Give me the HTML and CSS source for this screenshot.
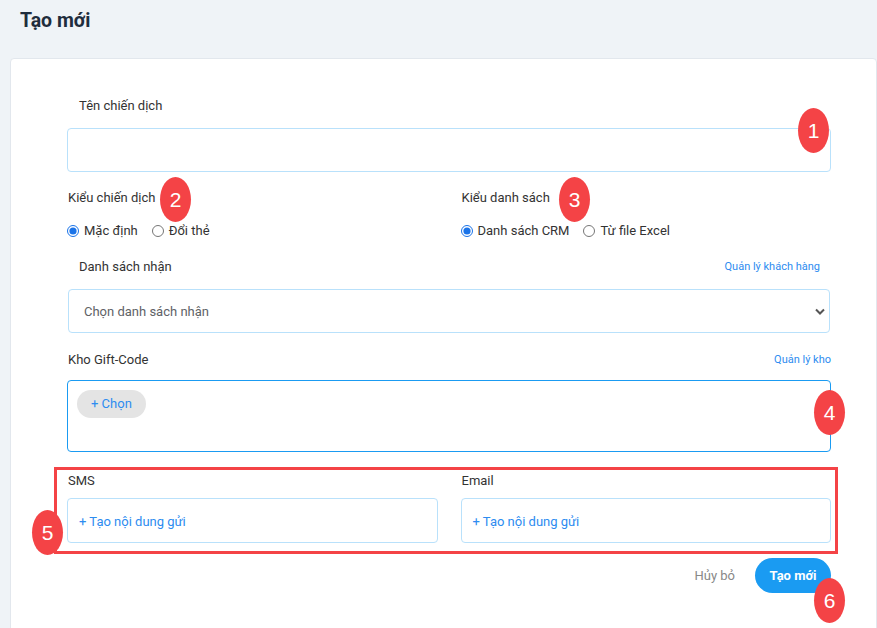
FILE: index.html
```html
<!DOCTYPE html>
<html lang="vi">

<head>
    <meta charset="UTF-8">
    <meta name="viewport" content="width=device-width, initial-scale=1.0">
    <title>Tạo mới</title>
    <link rel="stylesheet" href="styles.css">
</head>

<body>
    <div class="page-header">
        <h1>Tạo mới</h1>
    </div>

    <div class="card">
        <div class="field">
            <div class="field-label indent">Tên chiến dịch</div>
            <input type="text" class="text-input">
        </div>

        <div class="two-cols">
            <div class="col">
                <div class="field-label">Kiểu chiến dịch</div>
                <div class="radio-row">
                    <label class="radio-item"><input type="radio" name="campaignType" checked> Mặc định</label>
                    <label class="radio-item"><input type="radio" name="campaignType"> Đổi thẻ</label>
                </div>
            </div>
            <div class="col">
                <div class="field-label">Kiểu danh sách</div>
                <div class="radio-row">
                    <label class="radio-item"><input type="radio" name="listType" checked> Danh sách CRM</label>
                    <label class="radio-item"><input type="radio" name="listType"> Từ file Excel</label>
                </div>
            </div>
        </div>

        <div class="field recv">
            <div class="label-row indent-both">
                <span class="field-label">Danh sách nhận</span>
                <a href="#" class="side-link">Quản lý khách hàng</a>
            </div>
            <div class="select-box">
                <span class="placeholder">Chọn danh sách nhận</span>
                <svg class="chevron" width="10" height="7" viewBox="0 0 10 7">
                    <path d="M1 1.5 L5 5.5 L9 1.5" fill="none" stroke="#555" stroke-width="2" />
                </svg>
            </div>
        </div>

        <div class="field gift">
            <div class="label-row">
                <span class="field-label">Kho Gift-Code</span>
                <a href="#" class="side-link">Quản lý kho</a>
            </div>
            <div class="gift-box">
                <span class="pick-btn">+ Chọn</span>
            </div>
        </div>

        <div class="highlight">
            <div class="two-cols tight">
                <div class="col">
                    <div class="field-label">SMS</div>
                    <div class="content-box">+ Tạo nội dung gửi</div>
                </div>
                <div class="col">
                    <div class="field-label">Email</div>
                    <div class="content-box">+ Tạo nội dung gửi</div>
                </div>
            </div>
        </div>

        <div class="actions">
            <button class="btn-cancel">Hủy bỏ</button>
            <button class="btn-primary">Tạo mới</button>
        </div>

        <span class="badge b1">1</span>
        <span class="badge b2">2</span>
        <span class="badge b3">3</span>
        <span class="badge b4">4</span>
        <span class="badge b5">5</span>
        <span class="badge b6">6</span>
    </div>
</body>

</html>
```

FILE: styles.css
```css
:root {
    --blue: #1a9bf2;
    --link: #2d8cf0;
    --border-light: #b9e1fb;
    --badge: #f44346;
}

body {
    margin: 0;
    background-color: #eff3f7;
    font-family: Roboto, "Noto Sans", sans-serif;
    color: #333;
    font-size: 13px;
    overflow: hidden;
}

.page-header {
    height: 58px;
    padding-left: 20px;
    box-sizing: border-box;
}

.page-header h1 {
    margin: 0;
    padding-top: 8px;
    font-size: 19.5px;
    line-height: 26px;
    font-weight: bold;
    color: #1f2d3d;
}

.card {
    position: relative;
    margin-left: 10px;
    height: 560px;
    background-color: #ffffff;
    border: 1px solid #e2e7ed;
    border-radius: 4px;
    padding: 38px 45px 0 56px;
}

.field-label {
    font-size: 13px;
    line-height: 18px;
    color: #333;
}

.indent {
    padding-left: 12px;
}

.text-input {
    display: block;
    width: 100%;
    height: 44px;
    margin-top: 13px;
    border: 1px solid var(--border-light);
    border-radius: 4px;
    box-sizing: border-box;
    outline: none;
}

.two-cols {
    display: grid;
    grid-template-columns: 1fr 1fr;
    column-gap: 23px;
    margin-top: 17px;
}

.two-cols .col > .field-label {
    padding-left: 1px;
}

.radio-row {
    display: flex;
    gap: 14px;
    margin-top: 15px;
}

.radio-item {
    display: flex;
    align-items: center;
    font-size: 13px;
    line-height: 18px;
    color: #333;
}

.radio-item input {
    width: 12px;
    height: 12px;
    margin: 0 5px 0 0;
    accent-color: #1a73e8;
}

.recv {
    margin-top: 18px;
}

.label-row {
    display: flex;
    justify-content: space-between;
    align-items: center;
    height: 18px;
}

.indent-both {
    padding: 0 11px 0 12px;
}

.side-link {
    font-size: 11px;
    line-height: 18px;
    color: var(--link);
    text-decoration: none;
}

.select-box {
    display: flex;
    justify-content: space-between;
    align-items: center;
    height: 44px;
    margin: 13px 1px 0 1px;
    padding: 0 4px 0 15px;
    border: 1px solid var(--border-light);
    border-radius: 4px;
    box-sizing: border-box;
}

.placeholder {
    color: #606266;
    font-size: 13px;
}

.gift {
    margin-top: 18px;
}

.gift .label-row .field-label {
    padding-left: 1px;
}

.gift-box {
    height: 72px;
    margin-top: 11px;
    padding: 9px;
    border: 1.5px solid var(--blue);
    border-radius: 4px;
    box-sizing: border-box;
}

.pick-btn {
    display: inline-block;
    height: 28px;
    line-height: 28px;
    padding: 0 14px;
    border-radius: 14px;
    background-color: #e4e4e4;
    color: var(--link);
    font-size: 13px;
}

.highlight {
    margin: 15px -7px 0 -13px;
    padding: 2px 4px 8px 10px;
    border: 3px solid var(--badge);
}

.two-cols.tight {
    margin-top: 0;
}

.content-box {
    height: 45px;
    margin-top: 8px;
    padding-left: 11px;
    line-height: 45px;
    border: 1px solid var(--border-light);
    border-radius: 4px;
    box-sizing: border-box;
    color: var(--link);
    font-size: 13px;
}

.actions {
    display: flex;
    justify-content: flex-end;
    align-items: center;
    gap: 14px;
    margin-top: 4px;
}

.btn-cancel {
    border: none;
    background: none;
    color: #888;
    font-family: inherit;
    font-size: 13px;
    padding: 0 6px;
    cursor: pointer;
}

.btn-primary {
    height: 35px;
    width: 76px;
    border: none;
    border-radius: 18px;
    background-color: var(--blue);
    color: #fff;
    font-family: inherit;
    font-size: 13px;
    font-weight: bold;
    cursor: pointer;
}

/* numbered callouts laid over the form */
.badge {
    position: absolute;
    width: 31px;
    height: 45px;
    border-radius: 50%;
    background-color: var(--badge);
    color: #fff;
    font-family: "Liberation Sans", Arial, sans-serif;
    font-size: 21px;
    line-height: 45px;
    text-align: center;
}

.b1 { left: 787px; top: 49px; }
.b2 { left: 149px; top: 118px; }
.b3 { left: 548px; top: 118px; }
.b4 { left: 803px; top: 331px; }
.b5 { left: 21px; top: 451px; }
.b6 { left: 803px; top: 519px; }
```
